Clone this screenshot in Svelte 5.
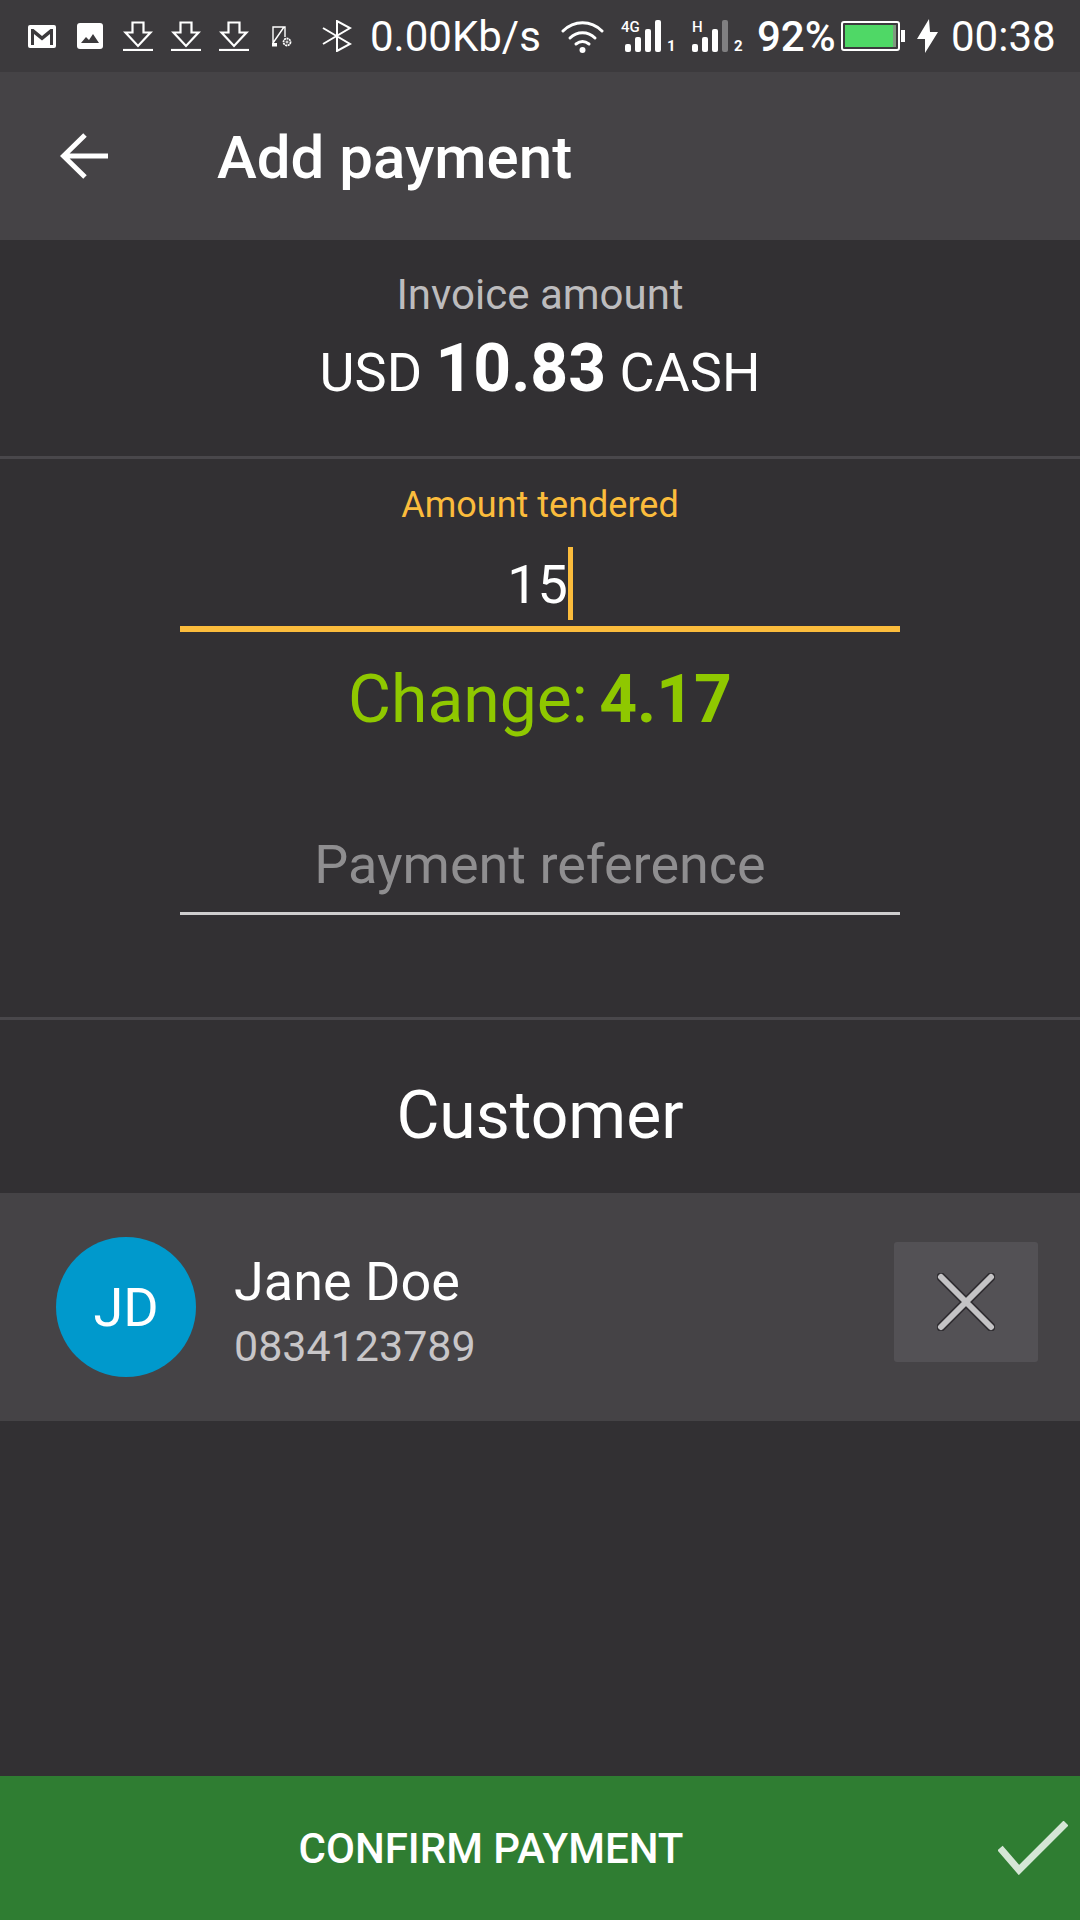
<script>
    const invoice = { currency: 'USD', amount: '10.83', method: 'CASH' };
    const tendered = '15';
    const change = '4.17';
    const customer = { initials: 'JD', name: 'Jane Doe', phone: '0834123789' };
</script>

{#snippet download()}
    <svg class="ic dl" viewBox="0 0 30 30" width="30" height="30" fill="none" stroke="#fff" stroke-width="2.2" aria-hidden="true">
        <path d="M9.5 1.500h11v10h7L15 25 2.500 11.500h7z" />
        <path d="M0 29h30" />
    </svg>
{/snippet}

<div class="screen">
    <div class="status">
        <svg class="ic mail" viewBox="0 0 28 23" width="28" height="23" aria-hidden="true">
            <rect width="28" height="23" rx="2" fill="#fff" />
            <path d="M3 20V4h2.500L14 11l8.500-7H25v16h-3V9l-8 6.500L6 9v11z" fill="#3c3a3d" />
        </svg>
        <svg class="ic photo" viewBox="0 0 26 26" width="26" height="26" aria-hidden="true">
            <rect width="26" height="26" rx="3" fill="#fff" />
            <path d="M4 20l5-6 3 3 4-6 6 9z" fill="#3c3a3d" />
        </svg>
        {@render download()}
        {@render download()}
        {@render download()}
        <svg class="ic rotate" viewBox="0 0 20 21" width="20" height="21" fill="none" stroke="#fff" aria-hidden="true">
            <path d="M1 20V1h12v10M12 1L1 17" stroke-width="1.400" />
            <path d="M0 17h5v3.500H0z" fill="#fff" stroke="none" />
            <circle cx="15" cy="16" r="3.500" stroke-width="1.800" stroke-dasharray="2 .6" />
            <circle cx="15" cy="16" r="1" stroke-width="1" />
        </svg>
        <svg class="ic bt" viewBox="0 0 30 32" width="30" height="32" fill="none" stroke="#fff" stroke-width="2" aria-hidden="true">
            <path d="M1 8l27 16-13 7V1l13 7L1 24" />
        </svg>
        <span class="speed">0.00Kb/s</span>
        <svg class="ic wifi" viewBox="0 0 43 33" width="43" height="33" fill="none" stroke="#fff" stroke-width="3" stroke-linecap="round" aria-hidden="true">
            <path d="M2 11C13 0 30 0 41 11" />
            <path d="M9 18c7-7 18-7 25 0" />
            <path d="M15 24c4-3 9-3 13 0" />
            <circle cx="21.500" cy="30" r="3" fill="#fff" stroke="none" />
        </svg>
        <div class="sim first">
            <span class="net">4G</span>
            <svg viewBox="0 0 36 32" width="36" height="32" fill="#fff" aria-hidden="true">
                <rect x="0" y="24" width="6" height="8" rx="2" />
                <rect x="10" y="17" width="6" height="15" rx="2" />
                <rect x="20" y="9" width="6" height="23" rx="2" />
                <rect x="30" y="0" width="6" height="32" rx="2" />
            </svg>
            <span class="slot">1</span>
        </div>
        <div class="sim second">
            <span class="net">H</span>
            <svg viewBox="0 0 36 32" width="36" height="32" fill="#fff" aria-hidden="true">
                <rect x="0" y="24" width="6" height="8" rx="2" />
                <rect x="10" y="17" width="6" height="15" rx="2" />
                <rect x="20" y="9" width="6" height="23" rx="2" />
                <rect x="30" y="0" width="6" height="32" rx="2" fill="#807f81" />
            </svg>
            <span class="slot">2</span>
        </div>
        <span class="pct">92%</span>
        <svg class="ic battery" viewBox="0 0 64 30" width="64" height="30" aria-hidden="true">
            <rect x="1" y="1" width="57" height="28" rx="2" fill="none" stroke="#fff" stroke-width="2" />
            <rect x="4" y="4" width="49" height="22" fill="#4fd866" />
            <rect x="52" y="4" width="3" height="22" fill="#7f9a80" />
            <rect x="60" y="9" width="4" height="12" fill="#fff" />
        </svg>
        <svg class="ic bolt" viewBox="0 0 21 34" width="21" height="34" fill="#fff" aria-hidden="true">
            <path d="M12 0L0 20h8L8 34 21 13h-8z" />
        </svg>
        <span class="clock">00:38</span>
    </div>

    <header class="appbar">
        <svg viewBox="0 0 48 46" width="48" height="46" fill="none" stroke="#fff" stroke-width="5" aria-hidden="true">
            <path d="M48 23H4M25 2L3.500 23 25 44" />
        </svg>
        <h1>Add payment</h1>
    </header>

    <main>
        <section class="invoice">
            <div class="muted">Invoice amount</div>
            <div class="total">{invoice.currency} <strong>{invoice.amount}</strong> {invoice.method}</div>
        </section>

        <section class="form">
            <div class="label">Amount tendered</div>
            <div class="field active"><span>{tendered}</span><i class="caret"></i></div>
            <div class="change">Change: <strong>{change}</strong></div>
            <div class="field ref">Payment reference</div>
        </section>

        <section class="customer">
            <h2>Customer</h2>
            <div class="row">
                <div class="avatar">{customer.initials}</div>
                <div class="who">
                    <div class="name">{customer.name}</div>
                    <div class="phone">{customer.phone}</div>
                </div>
                <button type="button" class="remove" aria-label="Remove customer">
                    <svg viewBox="0 0 58 58" width="58" height="58" fill="none" stroke-linecap="round" aria-hidden="true">
                        <path d="M4 4l50 50M54 4L4 54" stroke="#2f2d31" stroke-width="9" />
                        <path d="M4 4l50 50M54 4L4 54" stroke="#c4c3c5" stroke-width="6" />
                    </svg>
                </button>
            </div>
        </section>
    </main>

    <button type="button" class="confirm">
        <span>CONFIRM PAYMENT</span>
        <svg viewBox="0 0 70 54" width="70" height="54" fill="none" stroke="#d5e6d6" stroke-width="7" aria-hidden="true">
            <path d="M2 27l19 22L68 2" />
        </svg>
    </button>
</div>

<style>
    :global(body) {
        margin: 0;
        background: #323033;
    }
    .screen {
        width: 1080px;
        height: 1920px;
        display: flex;
        flex-direction: column;
        background: #323033;
        color: #fff;
        font-family: Roboto, 'Liberation Sans', sans-serif;
    }
    .status {
        height: 72px;
        flex-shrink: 0;
        display: flex;
        align-items: center;
        padding-left: 28px;
        background: #3c3a3d;
        box-sizing: border-box;
    }
    .ic {
        flex-shrink: 0;
    }
    .mail {
        margin-right: 21px;
    }
    .photo {
        margin-right: 20px;
    }
    .dl {
        margin-right: 18px;
    }
    .rotate {
        margin-left: 5px;
        margin-right: 30px;
    }
    .speed {
        margin-left: 18px;
        font-size: 42px;
        width: 172px;
        white-space: nowrap;
    }
    .wifi {
        margin-left: 19px;
    }
    .sim {
        position: relative;
        display: flex;
        align-items: flex-end;
        width: 62px;
        height: 32px;
    }
    .sim.first {
        margin-left: 17px;
        padding-left: 4px;
    }
    .sim.second {
        margin-left: 5px;
    }
    .net {
        position: absolute;
        left: 0;
        top: 1px;
        font-size: 15px;
        font-weight: 500;
        line-height: 13px;
        background: #3c3a3d;
    }
    .slot {
        font-size: 15px;
        font-weight: 700;
        line-height: 12px;
        margin-left: 6px;
    }
    .pct {
        margin-left: 3px;
        font-size: 42px;
        font-weight: 500;
        width: 84px;
    }
    .battery {
        margin-right: 12px;
    }
    .bolt {
        margin-right: 13px;
    }
    .clock {
        font-size: 42px;
    }
    .appbar {
        height: 168px;
        flex-shrink: 0;
        display: flex;
        align-items: center;
        gap: 109px;
        padding-left: 60px;
        background: #454346;
    }
    h1 {
        margin: 0;
        padding-top: 2px;
        font-size: 60px;
        font-weight: 500;
    }
    main {
        flex: 1;
    }
    section {
        text-align: center;
    }
    .invoice {
        height: 219px;
        box-sizing: border-box;
        padding-top: 31px;
        border-bottom: 3px solid #49474b;
    }
    .muted {
        font-size: 42px;
        line-height: 48px;
        color: #bdbcbe;
    }
    .total {
        margin-top: 14px;
        font-size: 54px;
        line-height: 72px;
    }
    .total strong {
        font-size: 66px;
        font-weight: 700;
    }
    .form {
        height: 561px;
        box-sizing: border-box;
        padding-top: 25px;
        border-bottom: 3px solid #49474b;
    }
    .label {
        font-size: 36px;
        line-height: 42px;
        color: #fbbc3c;
    }
    .field {
        width: 720px;
        margin: 0 auto;
        box-sizing: border-box;
    }
    .field.active {
        height: 106px;
        display: flex;
        justify-content: center;
        align-items: flex-end;
        padding-bottom: 6px;
        border-bottom: 6px solid #fbbc3c;
        font-size: 54px;
        line-height: 70px;
    }
    .caret {
        width: 5px;
        height: 73px;
        background: #fbbc3c;
    }
    .change {
        margin-top: 28px;
        font-size: 66px;
        line-height: 80px;
        color: #8fc800;
        word-spacing: -5px;
    }
    .change strong {
        font-weight: 700;
    }
    .field.ref {
        height: 85px;
        margin-top: 90px;
        border-bottom: 3px solid #cfcecf;
        font-size: 54px;
        line-height: 70px;
        color: #8f8e90;
    }
    h2 {
        margin: 0;
        height: 173px;
        box-sizing: border-box;
        padding-top: 63px;
        line-height: 1;
        font-size: 66px;
        font-weight: 400;
    }
    .row {
        height: 228px;
        display: flex;
        align-items: center;
        box-sizing: border-box;
        padding: 0 42px 0 56px;
        background: #454346;
        text-align: left;
    }
    .avatar {
        width: 140px;
        height: 140px;
        border-radius: 50%;
        display: grid;
        place-items: center;
        background: #0099cc;
        font-size: 54px;
    }
    .who {
        flex: 1;
        margin-left: 38px;
        padding-top: 10px;
    }
    .name {
        font-size: 54px;
        line-height: 64px;
    }
    .phone {
        margin-top: 4px;
        font-size: 43px;
        line-height: 56px;
        color: #c8c6c8;
    }
    .remove {
        width: 144px;
        height: 120px;
        margin-bottom: 10px;
        display: grid;
        place-items: center;
        padding: 0;
        border: 0;
        border-radius: 3px;
        background: #535155;
    }
    .confirm {
        height: 144px;
        flex-shrink: 0;
        display: flex;
        align-items: center;
        padding: 0 12px 0 0;
        border: 0;
        background: #2f7d32;
        color: #fff;
        font-family: inherit;
    }
    .confirm span {
        flex: 1;
        font-size: 42px;
        font-weight: 500;
        margin-right: 16px;
    }
</style>
